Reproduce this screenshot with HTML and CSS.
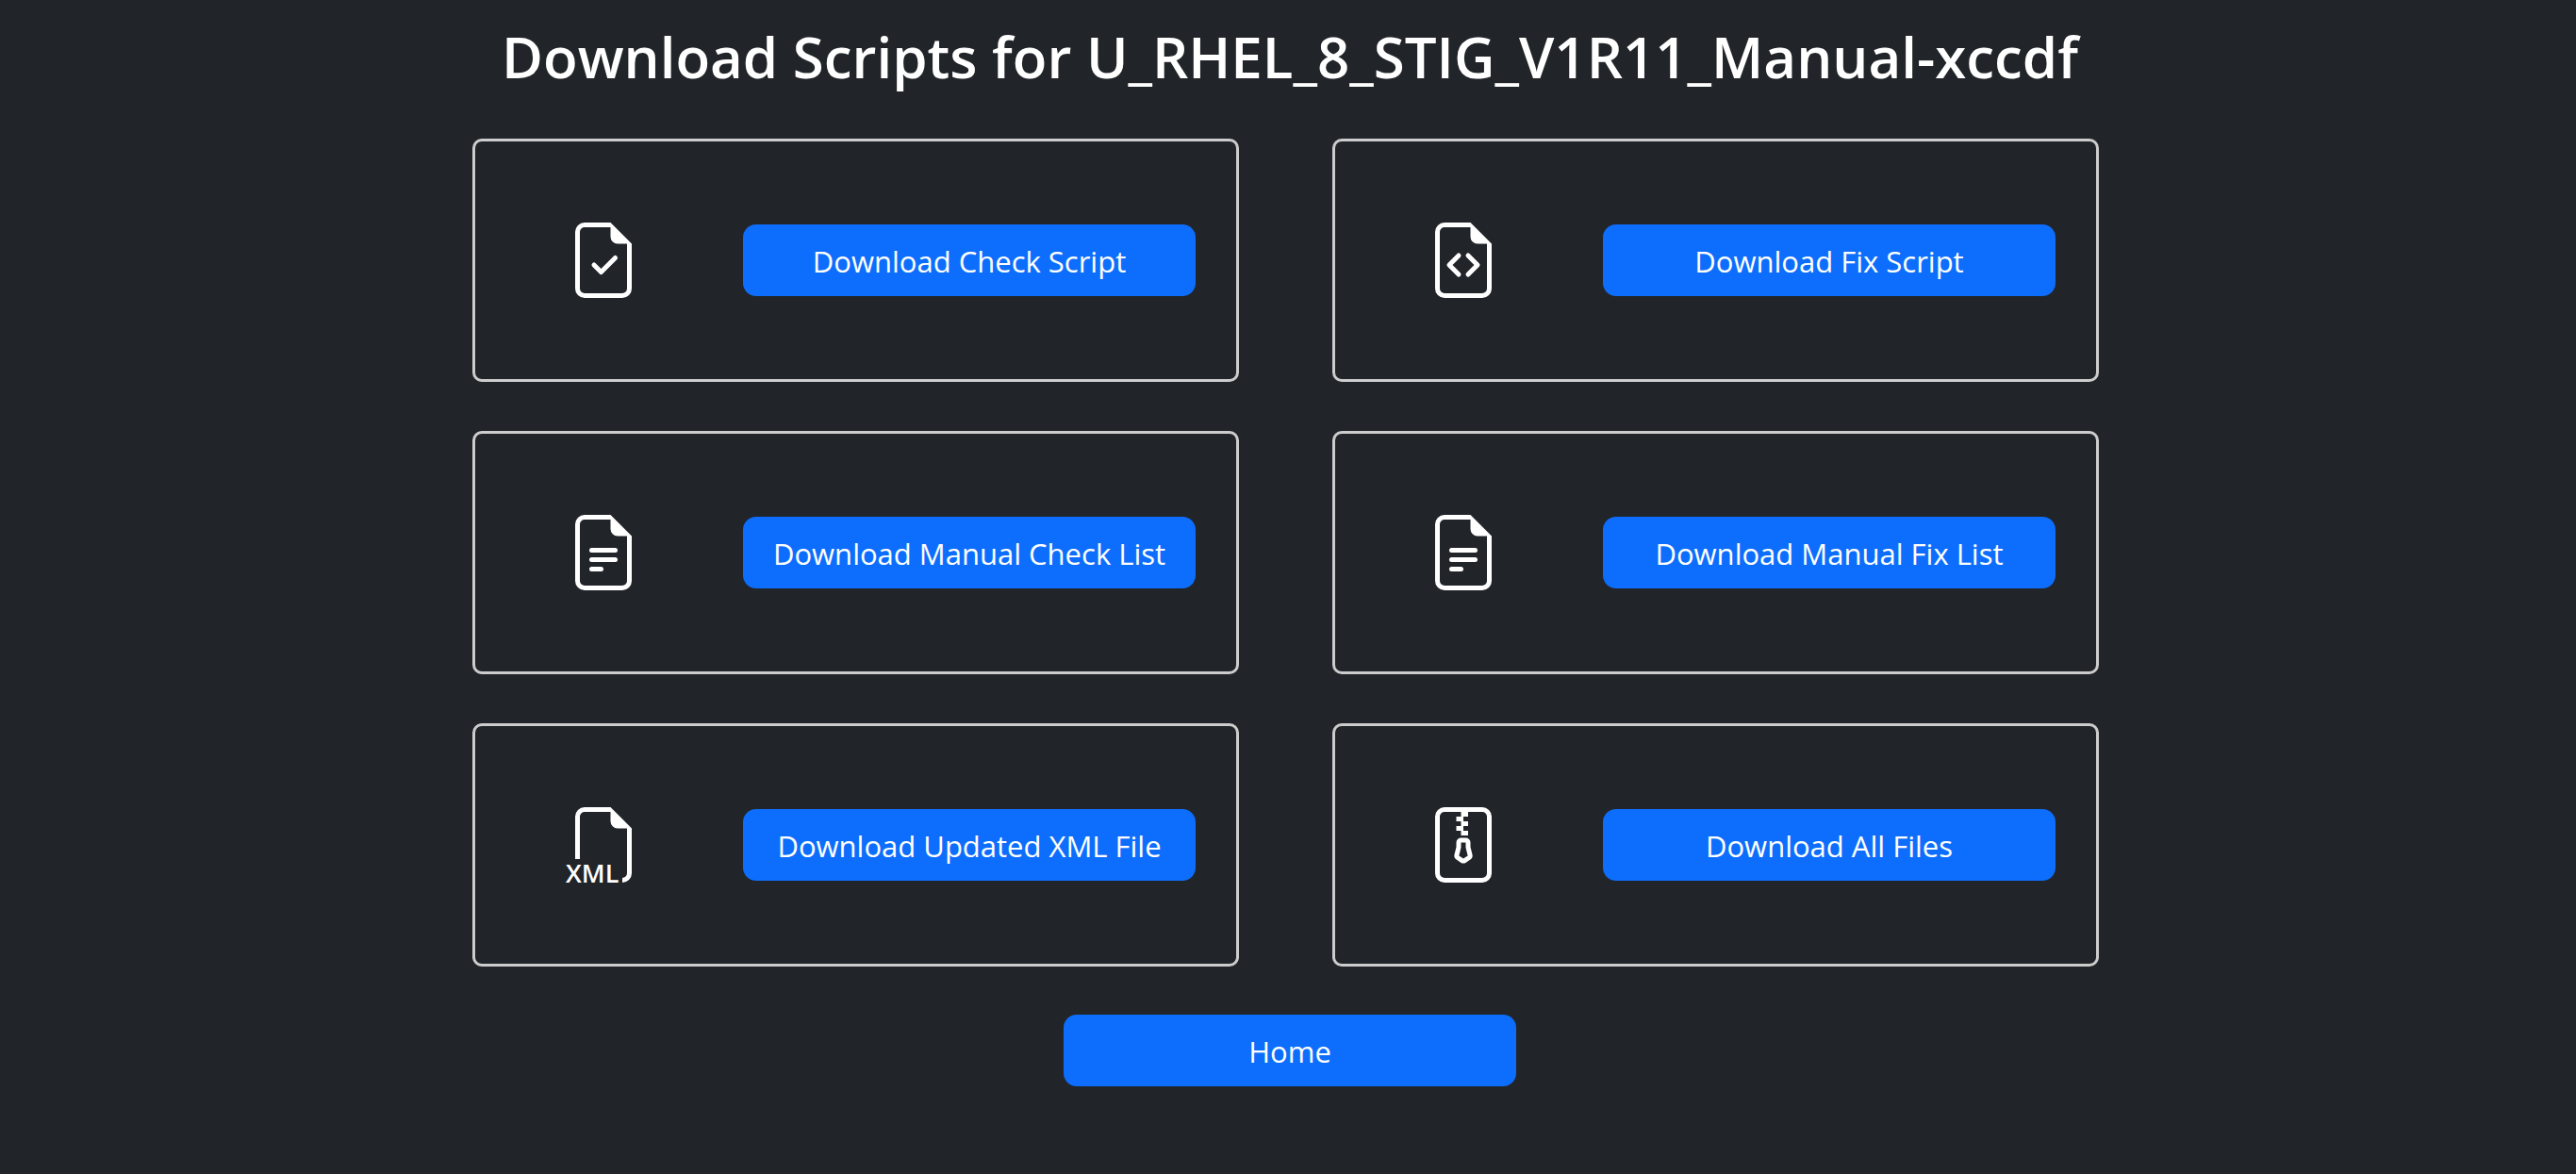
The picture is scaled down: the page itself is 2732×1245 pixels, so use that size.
FILE: index.html
```html
<!DOCTYPE html>
<html lang="en">
<head>
  <meta charset="utf-8">
  <meta name="viewport" content="width=device-width, initial-scale=1">
  <title>Download Scripts</title>
  <link rel="stylesheet" href="styles.css">
</head>
<body>
  <main class="page">
    <h1 class="title">Download Scripts for U_RHEL_8_STIG_V1R11_Manual-xccdf</h1>

    <div class="cards">
      <section class="card">
        <svg class="icon" viewBox="0 0 16 16" aria-hidden="true">
          <path d="M10.854 7.854a.5.5 0 0 0-.708-.708L7.5 9.793 6.354 8.646a.5.5 0 1 0-.708.708l1.5 1.5a.5.5 0 0 0 .708 0z"/>
          <path d="M14 14V4.5L9.5 0H4a2 2 0 0 0-2 2v12a2 2 0 0 0 2 2h8a2 2 0 0 0 2-2M9.5 3A1.5 1.5 0 0 0 11 4.5h2V14a1 1 0 0 1-1 1H4a1 1 0 0 1-1-1V2a1 1 0 0 1 1-1h5.5z"/>
        </svg>
        <button class="btn" type="button">Download Check Script</button>
      </section>

      <section class="card">
        <svg class="icon" viewBox="0 0 16 16" aria-hidden="true">
          <path d="M8.646 6.646a.5.5 0 0 1 .708 0l2 2a.5.5 0 0 1 0 .708l-2 2a.5.5 0 0 1-.708-.708L10.293 9 8.646 7.354a.5.5 0 0 1 0-.708m-1.292 0a.5.5 0 0 0-.708 0l-2 2a.5.5 0 0 0 0 .708l2 2a.5.5 0 0 0 .708-.708L5.707 9l1.647-1.646a.5.5 0 0 0 0-.708"/>
          <path d="M14 14V4.5L9.5 0H4a2 2 0 0 0-2 2v12a2 2 0 0 0 2 2h8a2 2 0 0 0 2-2M9.5 3A1.5 1.5 0 0 0 11 4.5h2V14a1 1 0 0 1-1 1H4a1 1 0 0 1-1-1V2a1 1 0 0 1 1-1h5.5z"/>
        </svg>
        <button class="btn" type="button">Download Fix Script</button>
      </section>

      <section class="card">
        <svg class="icon" viewBox="0 0 16 16" aria-hidden="true">
          <path d="M5.5 7a.5.5 0 0 0 0 1h5a.5.5 0 0 0 0-1zM5 9.5a.5.5 0 0 1 .5-.5h5a.5.5 0 0 1 0 1h-5a.5.5 0 0 1-.5-.5m0 2a.5.5 0 0 1 .5-.5h2a.5.5 0 0 1 0 1h-2a.5.5 0 0 1-.5-.5"/>
          <path d="M14 14V4.5L9.5 0H4a2 2 0 0 0-2 2v12a2 2 0 0 0 2 2h8a2 2 0 0 0 2-2M9.5 3A1.5 1.5 0 0 0 11 4.5h2V14a1 1 0 0 1-1 1H4a1 1 0 0 1-1-1V2a1 1 0 0 1 1-1h5.5z"/>
        </svg>
        <button class="btn" type="button">Download Manual Check List</button>
      </section>

      <section class="card">
        <svg class="icon" viewBox="0 0 16 16" aria-hidden="true">
          <path d="M5.5 7a.5.5 0 0 0 0 1h5a.5.5 0 0 0 0-1zM5 9.5a.5.5 0 0 1 .5-.5h5a.5.5 0 0 1 0 1h-5a.5.5 0 0 1-.5-.5m0 2a.5.5 0 0 1 .5-.5h2a.5.5 0 0 1 0 1h-2a.5.5 0 0 1-.5-.5"/>
          <path d="M14 14V4.5L9.5 0H4a2 2 0 0 0-2 2v12a2 2 0 0 0 2 2h8a2 2 0 0 0 2-2M9.5 3A1.5 1.5 0 0 0 11 4.5h2V14a1 1 0 0 1-1 1H4a1 1 0 0 1-1-1V2a1 1 0 0 1 1-1h5.5z"/>
        </svg>
        <button class="btn" type="button">Download Manual Fix List</button>
      </section>

      <section class="card">
        <svg class="icon" viewBox="0 0 80 80" aria-hidden="true">
          <path d="M70 22.500V70a10 10 0 0 1-10 10v-5a5 5 0 0 0 5-5V22.500h-10A7.500 7.500 0 0 1 47.500 15V5H20a5 5 0 0 0-5 5v45H10V10a10 10 0 0 1 10-10h27.500z"/>
          <text class="icon-label" x="0" y="80">XML</text>
        </svg>
        <button class="btn" type="button">Download Updated XML File</button>
      </section>

      <section class="card">
        <svg class="icon" viewBox="0 0 16 16" aria-hidden="true">
          <path d="M6.5 7.5a1 1 0 0 1 1-1h1a1 1 0 0 1 1 1v.938l.4 1.599a1 1 0 0 1-.416 1.074l-.93.62a1 1 0 0 1-1.109 0l-.93-.62a1 1 0 0 1-.415-1.074l.4-1.599zm2 0h-1v.938a1 1 0 0 1-.03.243l-.4 1.598.93.62.93-.62-.4-1.598a1 1 0 0 1-.03-.243z"/>
          <path d="M2 2a2 2 0 0 1 2-2h8a2 2 0 0 1 2 2v12a2 2 0 0 1-2 2H4a2 2 0 0 1-2-2zm5.500-1H4a1 1 0 0 0-1 1v12a1 1 0 0 0 1 1h8a1 1 0 0 0 1-1V2a1 1 0 0 0-1-1H9v1H8v1h1v1H8v1h1v1H7.500V5h-1V4h1V3h-1V2h1z"/>
        </svg>
        <button class="btn" type="button">Download All Files</button>
      </section>
    </div>

    <button class="btn" type="button">Home</button>
  </main>
</body>
</html>
```

FILE: styles.css
```css
* {
  box-sizing: border-box;
}

body {
  margin: 0;
  padding-left: 4px;
  background: #212529;
  color: #fff;
  font-family: "Segoe UI", "Open Sans", "Noto Sans", sans-serif;
  font-size: 31px;
  line-height: 48px;
}

.page {
  display: flex;
  flex-direction: column;
  align-items: center;
  gap: 51px;
  max-width: 1740px;
  margin: 0 auto;
  padding: 24px 0 32px;
}

.title {
  margin: 0;
  font-size: 60px;
  font-weight: 600;
  line-height: 72px;
  text-align: center;
}

.cards {
  display: grid;
  grid-template-columns: repeat(auto-fit, minmax(640px, 1fr));
  gap: 52px 99px;
  width: 100%;
  padding: 0 12px 0 3px;
}

.card {
  display: flex;
  align-items: center;
  justify-content: space-between;
  min-height: 258px;
  padding: 0 43px 0 96px;
  border: 3px solid #ccc;
  border-radius: 10px;
}

.icon {
  width: 80px;
  height: 80px;
  fill: currentColor;
  overflow: visible;
}

.icon-label {
  font-size: 27px;
  font-weight: 600;
}

.btn {
  width: 480px;
  padding: 15px 24px 13px;
  border: 0;
  border-radius: 14px;
  background: #0d6efd;
  color: #fff;
  font: inherit;
  white-space: nowrap;
  cursor: pointer;
}
```
